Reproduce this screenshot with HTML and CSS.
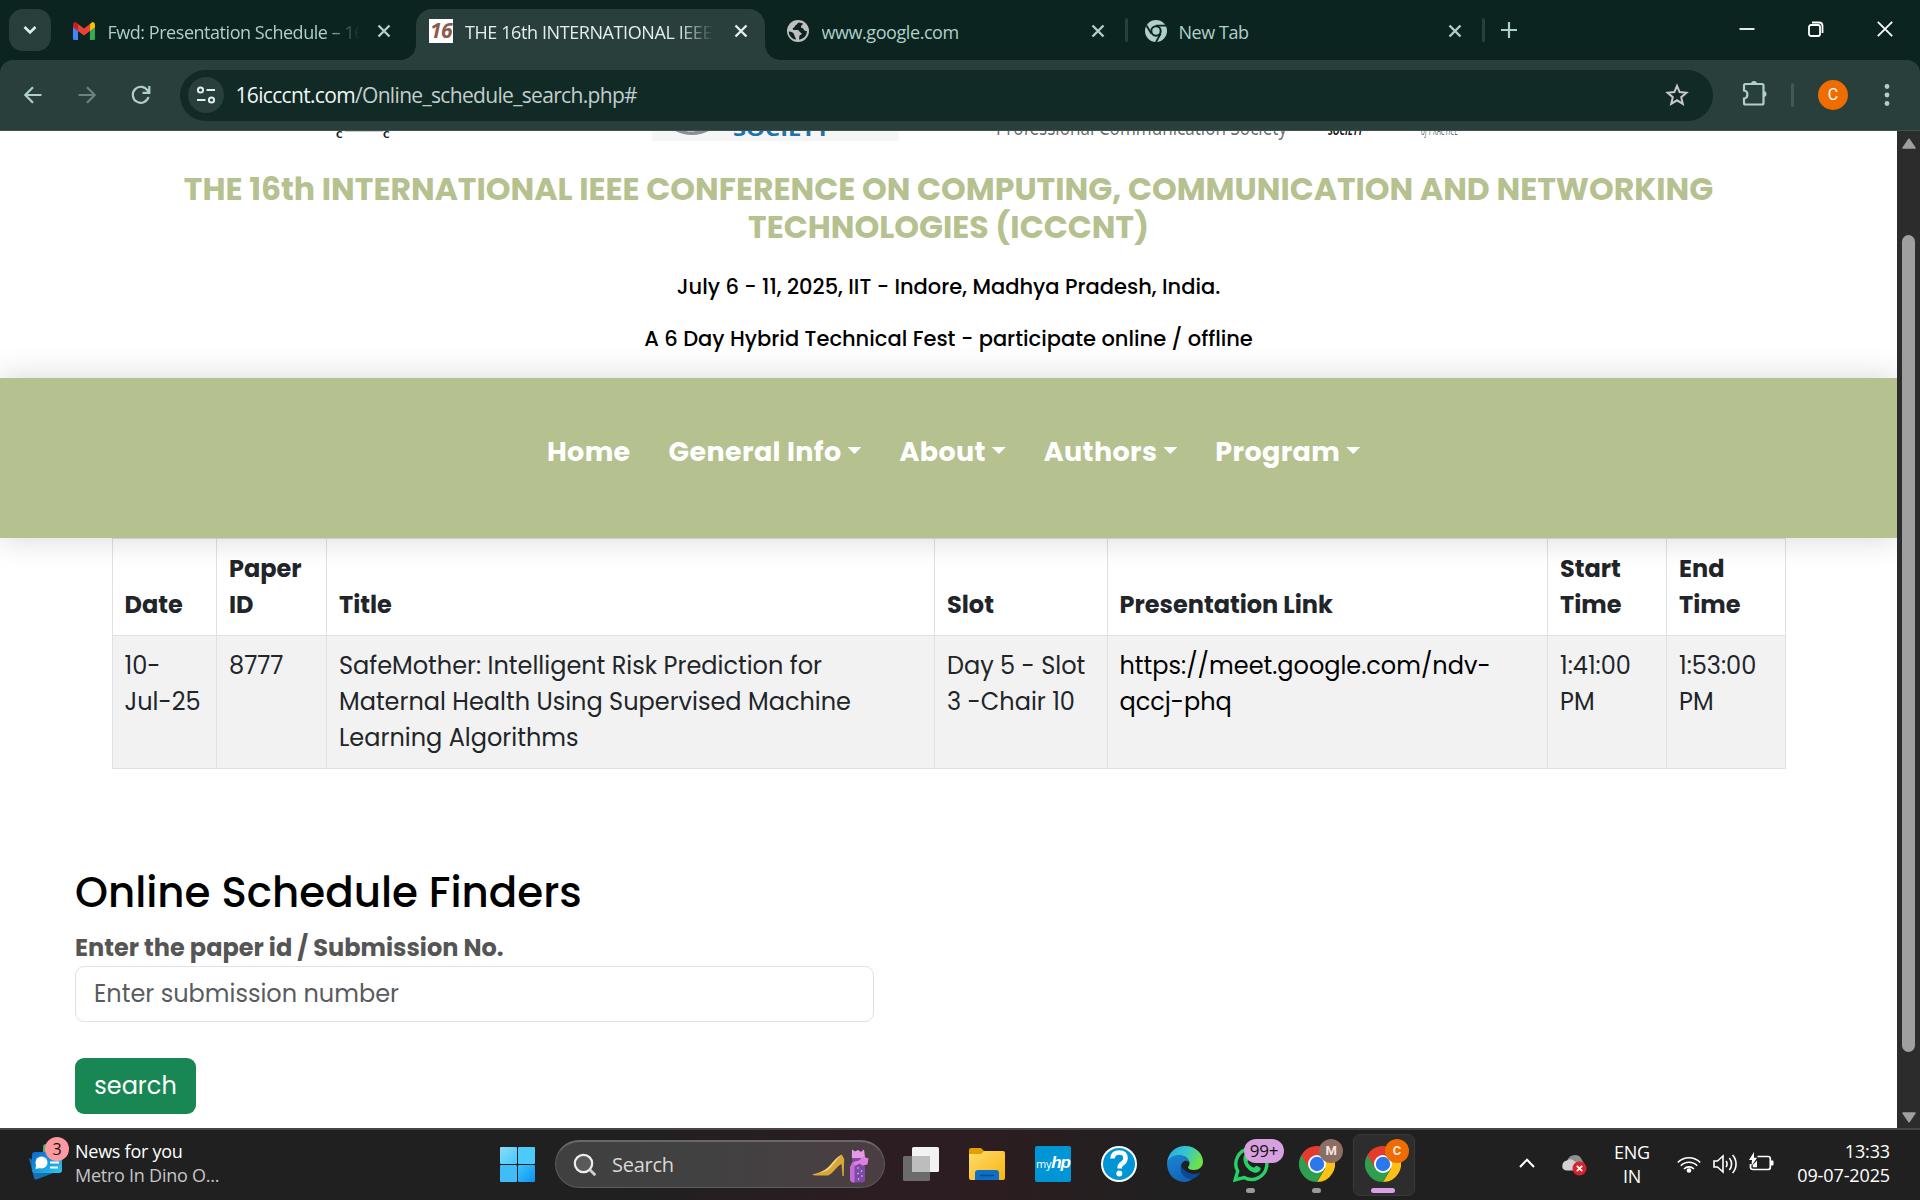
FILE: index.html
```html
<!DOCTYPE html>
<html lang="en">
<head>
<meta charset="utf-8">
<title>Online Schedule Search</title>
<link rel="stylesheet" href="styles.css">
</head>
<body>
<div class="browser">
  <header class="tabstrip">
    <button class="tab-search"><svg width="16" height="16" viewBox="0 0 16 16"><path d="M2.500 5l5.500 5.500L13.500 5" fill="none" stroke="#dff0ec" stroke-width="2.600"/></svg></button>
    <div class="tab tab-mail">
      <svg class="fav" width="22" height="18" viewBox="0 0 22 18"><path d="M0 3v13.500q0 1.500 1.500 1.500H5V7z" fill="#4285f4"/><path d="M22 3v13.500q0 1.500-1.500 1.500H17V7z" fill="#34a853"/><path d="M5 2l6 4.600L17 2v7l-6 4.600L5 9z" fill="#ea4335"/><path d="M0 5V2.500Q0 0 2.300 0 3.200 0 5 2v7L0 5.200z" fill="#c5221f"/><path d="M22 5V2.500Q22 0 19.700 0 18.800 0 17 2v7l5-3.800z" fill="#fbbc04"/></svg>
      <span class="tab-title fade">Fwd: Presentation Schedule – 16</span>
      <svg class="x" width="14" height="14" viewBox="0 0 14 14"><path d="M1.500 1.500l11 11M12.500 1.500l-11 11"/></svg>
    </div>
    <div class="tab tab-active">
      <span class="fav16">16</span>
      <span class="tab-title fade">THE 16th INTERNATIONAL IEEE</span>
      <svg class="x" width="14" height="14" viewBox="0 0 14 14"><path d="M1.500 1.500l11 11M12.500 1.500l-11 11"/></svg>
    </div>
    <div class="tab tab-google">
      <svg class="fav" width="22" height="22" viewBox="0 0 22 22"><circle cx="11" cy="11" r="11" fill="#bfbfbf"/><path d="M12 2.500c-2 .5-1.500 2-3 2.500s-.8 2-2 2.600S5 9 6.500 10h4c2 0 1.500 2 3 2.500s2 2-1 3l-.5 4c5-.5 8-4 7.800-8.500-2 .5-3-1-3.500-2.200s-2.800-.3-2.300-2.300 2-1.500 2-3z" fill="#0b2420"/><path d="M1.800 11.500c3 0 5.200 1.200 5.500 3.500s1.600 2 1.500 4.700c-4-.8-7-4-7-8.200z" fill="#0b2420"/></svg>
      <span class="tab-title">www.google.com</span>
      <svg class="x" width="14" height="14" viewBox="0 0 14 14"><path d="M1.500 1.500l11 11M12.500 1.500l-11 11"/></svg>
    </div>
    <i class="tab-div"></i>
    <div class="tab tab-new">
      <svg class="fav" width="22" height="22" viewBox="0 0 22 22"><circle cx="11" cy="11" r="11" fill="#b0cfc9"/><circle cx="11" cy="11" r="4.700" fill="none" stroke="#0b2420" stroke-width="2"/><path d="M11 5.700h10M6.300 13.600L1.500 5.500M15.700 13.600L11 22" stroke="#0b2420" stroke-width="1.800"/></svg>
      <span class="tab-title">New Tab</span>
      <svg class="x" width="14" height="14" viewBox="0 0 14 14"><path d="M1.500 1.500l11 11M12.500 1.500l-11 11"/></svg>
    </div>
    <i class="tab-div"></i>
    <svg class="plus" width="16" height="16" viewBox="0 0 16 16"><path d="M8 0v16M0 8h16" stroke="#b0cfc9" stroke-width="2.200"/></svg>
    <div class="win-buttons">
      <svg width="16" height="16" viewBox="0 0 16 16"><path d="M.5 8h15"/></svg>
      <svg width="16" height="16" viewBox="0 0 16 16"><rect x="1" y="4" width="11" height="11" rx="2"/><path d="M4 1.500h7q3.500 0 3.500 3.500v7"/></svg>
      <svg width="16" height="16" viewBox="0 0 16 16"><path d="M.8.8l14.400 14.400M15.200.8L.8 15.200"/></svg>
    </div>
  </header>

  <div class="toolbar">
    <svg class="nav-i" width="18" height="18" viewBox="0 0 18 18"><path d="M17.500 9H1.500M9 1.200L1.300 9 9 16.800"/></svg>
    <svg class="nav-i off" width="18" height="18" viewBox="0 0 18 18"><path d="M.5 9h16M9 1.200L16.700 9 9 16.800"/></svg>
    <svg class="nav-i" width="20" height="20" viewBox="0 0 20 20"><path d="M17.500 12a8 8 0 1 1-.8-6.300L18 7.500M18.300 1v6.800h-6.800"/></svg>
    <div class="omnibox">
      <span class="site-info"><svg width="20" height="18" viewBox="0 0 20 18"><g fill="none" stroke="#dff0ec" stroke-width="2"><circle cx="4.500" cy="4" r="2.600"/><path d="M10.500 4H19"/><circle cx="15.500" cy="14" r="2.600"/><path d="M1 14h8.500"/></g></svg></span>
      <span class="url"><b>16icccnt.com</b>/Online_schedule_search.php#</span>
      <svg class="star" width="24" height="24" viewBox="0 0 24 24"><path d="M12 2.800l2.600 6.300 6.800.6-5.200 4.500 1.600 6.700L12 17.300l-5.800 3.600 1.600-6.700L2.600 9.700l6.800-.6z" fill="none" stroke="#c8c8c8" stroke-width="2"/></svg>
    </div>
    <svg class="puzzle" width="26" height="26" viewBox="0 0 26 26"><path d="M3.500 4H21q1.500 0 1.500 1.500V23q0 1.500-1.500 1.500H4.500Q3 24.500 3 23v-4.500c4.500-.5 4.500-7.500 0-8V5.500Q3 4 4.500 4" fill="none" stroke="#b0cfc9" stroke-width="2.200"/><path d="M10 4a3 3 0 0 1 6 0zM22.500 11a3 3 0 0 1 0 6z" fill="#b0cfc9"/></svg>
    <i class="tool-div"></i>
    <span class="avatar">C</span>
    <svg class="dots" width="6" height="26" viewBox="0 0 6 26" fill="#b0cfc9"><circle cx="3" cy="4.500" r="2.400"/><circle cx="3" cy="13" r="2.400"/><circle cx="3" cy="21.500" r="2.400"/></svg>
  </div>

  <div class="viewport">
    <main class="page">
      <svg class="logos" width="1897" height="39" viewBox="0 0 1897 39">
        <rect x="652" y="0" width="247" height="10" fill="#f6f6f6"/>
        <ellipse cx="692" cy="-12" rx="25" ry="16" fill="#8d8d92"/><ellipse cx="691" cy="-14" rx="19" ry="14.500" fill="#f6f6f6"/>
        <text x="733" y="4.500" class="lg-society" textLength="97" lengthAdjust="spacingAndGlyphs">SOCIETY</text>
        <text x="336" y="7" class="lg-c">C</text><text x="383" y="7" class="lg-c">C</text>
        <path d="M345 .5h38" stroke="#c9cdc9"/>
        <text x="996" y="4" class="lg-pcs" textLength="291" lengthAdjust="spacingAndGlyphs">Professional Communication Society</text>
        <text x="1328" y="4" class="lg-bold" textLength="35" lengthAdjust="spacingAndGlyphs">SOCIETY</text>
        <text x="1421" y="4" class="lg-thin" textLength="37" lengthAdjust="spacingAndGlyphs">of PRACTICE</text>
      </svg>
      <div class="masthead">
        <h1>THE 16th INTERNATIONAL IEEE CONFERENCE ON COMPUTING, COMMUNICATION AND NETWORKING<br>TECHNOLOGIES (ICCCNT)</h1>
        <p>July 6 - 11, 2025, IIT - Indore, Madhya Pradesh, India.</p>
        <p>A 6 Day Hybrid Technical Fest - participate online / offline</p>
      </div>
      <nav class="menu">
        <a>Home</a>
        <a class="drop">General Info</a>
        <a class="drop">About</a>
        <a class="drop">Authors</a>
        <a class="drop">Program</a>
      </nav>
      <table class="schedule">
        <colgroup><col class="c1"><col class="c2"><col class="c3"><col class="c4"><col class="c5"><col class="c6"><col class="c7"></colgroup>
        <tr class="head">
          <th>Date</th><th>Paper<br>ID</th><th>Title</th><th>Slot</th><th class="link">Presentation Link</th><th>Start<br>Time</th><th>End<br>Time</th>
        </tr>
        <tr class="odd">
          <td>10-<br>Jul-25</td>
          <td>8777</td>
          <td>SafeMother: Intelligent Risk Prediction for<br>Maternal Health Using Supervised Machine<br>Learning Algorithms</td>
          <td>Day 5 - Slot<br>3 -Chair 10</td>
          <td class="link">https://meet.google.com/ndv-<br>qccj-phq</td>
          <td>1:41:00<br>PM</td>
          <td>1:53:00<br>PM</td>
        </tr>
      </table>
      <section class="finder">
        <h2>Online Schedule Finders</h2>
        <label>Enter the paper id / Submission No.</label>
        <div class="field">Enter submission number</div>
        <button class="search">search</button>
      </section>
    </main>
    <div class="scrollbar">
      <svg width="14" height="11" viewBox="0 0 14 11"><path d="M7 1.200L13 10H1z" fill="#9f9f9f" stroke="#9f9f9f" stroke-width="1.500" stroke-linejoin="round"/></svg>
      <i class="thumb"></i>
      <svg width="14" height="11" viewBox="0 0 14 11"><path d="M7 9.800L13 1H1z" fill="#9f9f9f" stroke="#9f9f9f" stroke-width="1.500" stroke-linejoin="round"/></svg>
    </div>
  </div>

  <footer class="taskbar">
    <div class="news">
      <div class="news-icon">
        <svg width="34" height="38" viewBox="0 0 34 38"><rect x="14" y="0" width="14" height="20" rx="3" fill="#4caf6e"/><path d="M0 14l5 20q.5 2 2.500 1.400L27 28z" fill="#1670b8"/><defs><linearGradient id="nw" x1="0" y1="0" x2="1" y2="1"><stop offset="0" stop-color="#0a66d0"/><stop offset="1" stop-color="#2bc9ea"/></linearGradient></defs><rect x="3" y="8" width="30" height="21" rx="3" fill="url(#nw)"/><circle cx="12.500" cy="18.500" r="6" fill="#fff"/><path d="M6.500 25l1-6 4 5z" fill="#fff"/><path d="M21 18.500h9M21 23.500h8" stroke="#fff" stroke-width="2"/></svg>
        <b class="news-badge">3</b>
      </div>
      <div class="news-text"><b>News for you</b><br>Metro In Dino O...</div>
    </div>
    <div class="apps">
      <svg class="start" width="35" height="35" viewBox="0 0 35 35"><defs><linearGradient id="wn" x1="0" y1="0" x2="1" y2="1"><stop offset="0" stop-color="#8adcfa"/><stop offset="1" stop-color="#45c8fb"/></linearGradient><linearGradient id="wn2" x1="0" y1="0" x2="1" y2="1"><stop offset="0" stop-color="#3cc3fb"/><stop offset="1" stop-color="#0d93f5"/></linearGradient></defs><rect width="17" height="17" rx="1" fill="url(#wn)"/><rect x="18" width="17" height="17" rx="1" fill="#4ccbfb"/><rect y="18" width="17" height="17" rx="1" fill="#40bdf8"/><rect x="18" y="18" width="17" height="17" rx="1" fill="url(#wn2)"/></svg>
      <div class="searchbox">
        <svg width="24" height="24" viewBox="0 0 24 24"><circle cx="10.500" cy="10.500" r="8.700" fill="#5a5a5a" stroke="#eee" stroke-width="2.200"/><path d="M16.800 16.800l5.500 5.500" stroke="#d0d0d0" stroke-width="2.800"/></svg>
        <span class="search-text">Search</span>
        <svg width="60" height="36" viewBox="0 0 60 36"><path d="M1 27.500C9 25.500 14 24 19 18.500 23 14 26 10 30.500 7.500q3.500 3.500 2.500 9L32.800 29h-1.400l-.9-12C26 19 22 26.500 17 28.500H5q-3 0-4-1z" fill="#d9a638"/><path d="M30.500 7.500C26 10 23 14 19 18.500c-3.500 4-7 5.700-11 7 6 0 9.500-2.500 13-6.500s6-8 9.500-11.500z" fill="#f4d382"/><path d="M41 2.500l3 2 3-1.500 3 2 3-2.500 1 8-2 5 2 4v13q0 3-3 3h-8q-4 0-4-3.500V20l2.500-5-1-6z" fill="#7d4aa8"/><path d="M41 2.500l3 2 3-1.500 3 2 3-2.500 1 8.500H41z" fill="#e59be4"/><path d="M42 15l6-1.500 4-4 5.500 2-1 6-5 1-3-2-6 3z" fill="#e07fe0"/><path d="M39 20l2.500-5 2 1v19.500H43q-4 0-4-3.500z" fill="#c46bd8"/><g fill="#e8d0ff"><circle cx="47" cy="21" r=".8"/><circle cx="50.500" cy="24" r=".8"/><circle cx="47" cy="26.500" r=".8"/><circle cx="51" cy="29" r=".8"/><circle cx="47.500" cy="32" r=".8"/></g></svg>
      </div>
      <div class="app"><svg width="36" height="36" viewBox="0 0 36 36"><rect x="9" y="1" width="27" height="25" rx="1.500" fill="#f2f2f2"/><rect x="0" y="10" width="27" height="25" rx="1.500" fill="#6b6b6b"/><rect x="9" y="10" width="18" height="16" fill="#bdbdbd"/></svg></div>
      <div class="app"><svg width="36" height="36" viewBox="0 0 36 36"><defs><linearGradient id="fd" x1="0" y1="0" x2="1" y2="1"><stop offset="0" stop-color="#ffdc6e"/><stop offset="1" stop-color="#f8b50f"/></linearGradient></defs><path d="M0 4q0-2 2-2h10l3 3v6H0z" fill="#dfa000"/><path d="M0 8h12l3-3h19q2 0 2 2v25q0 2-2 2H2q-2 0-2-2z" fill="url(#fd)"/><path d="M6 34V27q0-3 3-3h18q3 0 3 3v7z" fill="#0f6fc4"/><path d="M11 29.500h14" stroke="#0a4a8c" stroke-width="1.500"/></svg></div>
      <div class="app"><div class="myhp"><span>my</span><i>hp</i></div></div>
      <div class="app"><svg width="36" height="36" viewBox="0 0 36 36"><circle cx="18" cy="18" r="18" fill="#fff"/><circle cx="18" cy="18" r="16" fill="#0096d6"/><path d="M11.500 12.500q.3-6 6.700-6 6.300 0 6.300 5.700 0 3.300-3.200 5.300-2.600 1.700-2.600 3.800v1.200" fill="none" stroke="#fff" stroke-width="4.600"/><circle cx="18.300" cy="27.500" r="3" fill="#fff"/></svg></div>
      <div class="app"><svg width="36" height="36" viewBox="0 0 36 36"><defs><linearGradient id="e1" x1="0" y1="0" x2="1" y2=".4"><stop offset="0" stop-color="#2aa6e8"/><stop offset=".55" stop-color="#35c6cf"/><stop offset="1" stop-color="#6fe04a"/></linearGradient><linearGradient id="e2" x1="0" y1="0" x2=".4" y2="1"><stop offset="0" stop-color="#1b86d6"/><stop offset="1" stop-color="#1464b8"/></linearGradient></defs><path d="M0 17C1 7 8 0 18 0c11 0 18 8 18 15.500 0 5.500-4 8.500-9 8.500-4 0-6-1.500-6-2.500s1.500-1.500 1.500-4C22.500 13 18 9.500 12.500 9.500 6 9.500 1.500 13 0 17z" fill="url(#e1)"/><path d="M0 17C1.500 12 6 9 12 9c6 0 10.500 4 10.500 8.500 0-3-7-5-8.500 2.500-1.500 8 6 14 12 12.500-3 2.500-6 3.500-9 3.500C7 35.500 0 28 0 17z" fill="url(#e2)"/><path d="M14 20c-1.500 8 5 14.500 12 12.800 3-1 6-3.500 7.500-6.500-3.500 2-8.500 2.200-12.500.2-3.500-1.700-5.800-4.500-7-6.500z" fill="#0c4a94"/></svg></div>
      <div class="app run"><svg width="36" height="36" viewBox="0 0 36 36"><path d="M2.200 33.800l2.500-8.500A15.500 15.500 0 1 1 11 31.600z" fill="none" stroke="#25d366" stroke-width="3.400"/><path d="M11 9.500c1-1.500 3-1.500 3.600 0l1.300 3.200c.4 1.300-1.700 2.300-1.300 3.300 1.300 2.800 3.400 4.600 6 5.600 1.200.4 2-2.300 3.500-1.700l3 1.600c1.500.9 0 4.500-3.600 5.200C17.500 27.500 8 18 11 9.500z" fill="#25d366"/></svg><b class="count">99+</b></div>
      <div class="app run"><svg width="36" height="36" viewBox="0 0 36 36"><g id="chrome"><path d="M18 18L33.600 9A18 18 0 0 1 18 36l8-13.500z" fill="#fbc116"/><path d="M2.400 9A18 18 0 0 0 18 36l7.800-13.500L18 18z" fill="#2e9f4e"/><path d="M18 9h15.600a18 18 0 0 0-31.200 0l7.800 13.500z" fill="#e33b2e"/><circle cx="18" cy="18" r="9" fill="#fff"/><circle cx="18" cy="18" r="7.200" fill="#2b78ee"/></g></svg><b class="pf pf-m">M</b></div>
      <div class="app run active"><svg width="36" height="36" viewBox="0 0 36 36"><use href="#chrome"/></svg><b class="pf pf-c">C</b></div>
    </div>
    <div class="tray">
      <svg class="chev" width="16" height="10" viewBox="0 0 16 10"><path d="M1 9l7-7.300L15 9" fill="none" stroke="#fff" stroke-width="2"/></svg>
      <svg class="cloud" width="26" height="22" viewBox="0 0 26 22"><path d="M5 7q2-6 8-6 5 0 7 5l3 5H7z" fill="#8f8f8f"/><path d="M4.500 16.500Q0 16 .3 11.500.8 7 5 6.500q3-2.500 6.500 0l8 6-4 4z" fill="#d2d2d2"/><circle cx="17.500" cy="14.500" r="7" fill="#d8232e"/><path d="M14.800 11.800l5.400 5.400M20.200 11.800l-5.400 5.400" stroke="#fff" stroke-width="1.700"/></svg>
      <div class="lang">ENG<br>IN</div>
      <svg class="wifi" width="24" height="18" viewBox="0 0 24 18"><g fill="none" stroke="#fff" stroke-width="1.600"><path d="M.8 7.500a15.500 15.500 0 0 1 22.400 0M3.800 10.800a11.300 11.300 0 0 1 16.400 0M7 14a7 7 0 0 1 10 0"/></g><circle cx="12" cy="15.500" r="2.300" fill="#fff"/></svg>
      <svg class="spk" width="25" height="20" viewBox="0 0 25 20"><g fill="none" stroke="#fff" stroke-width="1.600"><path d="M1 7h3.500L10 2v16l-5.500-5H1z"/><path d="M13 7a5 5 0 0 1 0 6M16.300 4a9 9 0 0 1 0 12M19.600 1a13.500 13.500 0 0 1 0 18"/></g></svg>
      <svg class="bat" width="25" height="20" viewBox="0 0 25 20"><path d="M8.500 4.500H19q2.300 0 2.300 2.300v8.400q0 2.300-2.300 2.300H4q-2.500 0-2.500-2.300V12" fill="none" stroke="#fff" stroke-width="1.700"/><path d="M22 8.500h1.500q1 0 1 1v3q0 1-1 1H22z" fill="#fff"/><path d="M5 0L0 8h3l-.5 6L8 5.800H5z" fill="#fff"/><path d="M3.800 15.300V13L8 8.500v6.800z" fill="#fff"/></svg>
      <div class="clock">13:33<br>09-07-2025</div>
    </div>
  </footer>
</div>
</body>
</html>
```
FILE: styles.css
```css
* { box-sizing: border-box; }
body { margin: 0; background: #fff; font-family: Poppins, Inter, sans-serif; }
svg { display: block; flex: none; }
button { border: 0; padding: 0; font: inherit; }
.browser { width: 1920px; height: 1200px; display: flex; flex-direction: column; overflow: hidden; background: #0b2420; }

/* tab strip */
.tabstrip { height: 60px; flex: none; display: flex; background: #0b2420; font: 18px/24px "Segoe UI", "Open Sans", sans-serif; letter-spacing: -.43px; color: #b0cfc9; }
.tab-search { width: 42px; height: 42px; margin: 9px 0 0 9px; border-radius: 14px; background: #283f3b; display: grid; place-items: center; }
.tab { display: flex; align-items: center; height: 51px; margin-top: 9px; padding-bottom: 8px; white-space: nowrap; }
.tab-mail { width: 365px; padding-left: 22px; padding-right: 25px; }
.tab-active { width: 349px; padding-left: 13px; padding-right: 17px; background: #283f3b; color: #e4eeec; border-radius: 16px 16px 0 0; position: relative; }
.tab-active::before, .tab-active::after { content: ""; position: absolute; bottom: 0; width: 15px; height: 15px; }
.tab-active::before { left: -15px; background: radial-gradient(circle at 0 0, transparent 14.5px, #283f3b 15px); }
.tab-active::after { right: -15px; background: radial-gradient(circle at 100% 0, transparent 14.5px, #283f3b 15px); }
.tab-google { width: 360px; padding-left: 22px; padding-right: 20px; }
.tab-new { width: 354px; padding-left: 17px; padding-right: 20px; }
.tab-title { flex: 1; overflow: hidden; margin: 2px 18px 0 12.5px; }
.tab-new .tab-title { margin-left: 11.5px; }
.tab-mail .tab-title { margin-right: 17px; letter-spacing: -.46px; }
.tab-active .tab-title { margin-right: 20px; margin-left: 12px; letter-spacing: -.41px; }
.fade { -webkit-mask-image: linear-gradient(90deg, #000 calc(100% - 36px), transparent); mask-image: linear-gradient(90deg, #000 calc(100% - 36px), transparent); }
.x path { stroke: #b0cfc9; stroke-width: 2.4; }
.tab-active .x path { stroke: #e4eeec; }
.fav16 { width: 24px; height: 24px; background: #fff; color: #8d5a4c; font: italic bold 21px/23px "Open Sans", sans-serif; letter-spacing: -.5px; text-align: center; }
.tab-div { width: 3px; height: 24px; margin-top: 18px; background: #283f3b; border-radius: 2px; }
.plus { margin: 22px 0 0 16px; }
.win-buttons { margin: 21px 27px 0 auto; display: flex; gap: 53px; }
.win-buttons path, .win-buttons rect { fill: none; stroke: #fff; stroke-width: 1.8; }

/* toolbar */
.toolbar { height: 71px; flex: none; display: flex; align-items: center; background: #283f3b; border-radius: 13px 13px 0 0; border-bottom: 1px solid #3d524e; padding: 0 30px 0 24px; }
.nav-i { margin-right: 36px; }
.nav-i path { fill: none; stroke: #b0cfc9; stroke-width: 2.2; }
.nav-i.off path { stroke: #6b827d; }
.nav-i + .nav-i + .nav-i { margin: 0 29px 0 -1px; }
.omnibox { width: 1533px; height: 51px; border-radius: 26px; background: #112a26; display: flex; align-items: center; padding: 0 24px 0 8px; }
.site-info { width: 36px; height: 36px; border-radius: 50%; background: #283f3b; display: grid; place-items: center; }
.url { margin: -1px 0 0 11.5px; flex: 1; font: 21px/28px "Segoe UI", "Open Sans", sans-serif; letter-spacing: -.67px; color: #c3cfcc; white-space: nowrap; }
.url b { font-weight: 400; color: #f1f6f5; }
.puzzle { margin: -4px 0 0 28px; }
.tool-div { width: 3px; height: 24px; margin-left: 24px; background: #3f5a55; border-radius: 2px; }
.avatar { width: 30px; height: 30px; margin-left: 24px; border-radius: 50%; background: #ef6c00; color: #fff; font: 16px/30px Roboto, sans-serif; text-align: center; }
.dots { margin-left: 36px; }

/* page */
.viewport { height: 997px; flex: none; display: flex; background: #fff; }
.page { width: 1897px; flex: none; overflow: hidden; background: #fff; color: #212529; }
.logos { overflow: hidden; }
.lg-society { font: bold 20px "Open Sans", sans-serif; fill: #1a74ad; }
.lg-c { font: bold 9px "DejaVu Sans", sans-serif; fill: #222; }
.lg-pcs { font: 21px "Open Sans", sans-serif; fill: #6b6b6b; }
.lg-bold { font: italic bold 13px "Open Sans", sans-serif; fill: #111; }
.lg-thin { font: italic 13px "Open Sans", sans-serif; fill: #666; }
.masthead { height: 208px; text-align: center; white-space: nowrap; color: #000; }
.masthead h1 { margin: 0; font-size: 31.5px; line-height: 38px; font-weight: 700; color: #b5c18e; }
.masthead p { margin: 0 0 20px; font-size: 21px; line-height: 32px; font-weight: 500; }
.masthead h1 + p { margin-top: 25px; }
.menu { height: 160px; position: relative; display: flex; gap: 38px; padding: 53px 0 0 547px; background: #b5c18e; box-shadow: 0 0 30px rgba(0, 0, 0, .17); color: #fff; font-size: 27px; line-height: 42px; font-weight: 700; letter-spacing: .35px; white-space: nowrap; }
.drop { display: flex; }
.drop::after { content: ""; margin: 16px 0 0 6px; width: 14px; height: 7px; background: #fff; clip-path: polygon(0 0, 100% 0, 50% 100%); }
.schedule { margin: 0 0 0 112px; width: 1673px; table-layout: fixed; border-collapse: collapse; font-size: 24px; line-height: 36px; white-space: nowrap; }
.schedule th, .schedule td { border: 1px solid #dee2e6; text-align: left; }
.head { height: 97px; }
.schedule th { padding: 6px 12px 12px; vertical-align: bottom; font-weight: 700; }
.schedule td { padding: 12px 12px 6px; vertical-align: top; }
.schedule tr > :first-child, .schedule .link { padding-left: 11.5px; }
.odd { height: 133px; background: #f2f2f2; }
td.link { color: #000; }
.c1 { width: 104px; } .c2 { width: 110px; } .c3 { width: 608px; } .c4 { width: 173px; } .c5 { width: 440px; } .c6 { width: 119px; } .c7 { width: 119px; }
.finder { padding: 98px 0 0 75px; white-space: nowrap; }
.finder h2 { margin: 0 0 11px; font-size: 42px; line-height: 52px; font-weight: 500; color: #000; }
.finder label { display: block; font-size: 24px; line-height: 36px; font-weight: 700; color: #555; }
.field { width: 799px; height: 56px; border: 1px solid #dee2e6; border-radius: 9px; padding: 9px 18px; font-size: 24px; line-height: 36px; color: #595c5f; }
.search { display: block; margin-top: 36px; width: 121px; height: 56px; border-radius: 9px; background: #198754; color: #fff; font-size: 24px; line-height: 36px; }
.scrollbar { width: 23px; flex: none; background: #2c2c2c; display: flex; flex-direction: column; align-items: center; padding: 7px 0 5px; }
.thumb { width: 13px; height: 817px; margin: 86px 0 auto; border-radius: 7px; background: #9f9f9f; }

/* taskbar */
.taskbar { height: 72px; flex: none; display: flex; position: relative; border-top: 2px solid #464646; background: linear-gradient(90deg, #202020 0, #202020 620px, #2b1d22 860px, #2b1d20 1000px, #202020 1180px); color: #fff; font: 18px/24px "Segoe UI", "Open Sans", sans-serif; letter-spacing: -.25px; white-space: nowrap; }
.news { width: 500px; display: flex; padding-left: 29px; }
.news-icon { position: relative; width: 46px; padding-top: 14px; }
.news-badge { position: absolute; left: 16px; top: 7px; width: 24px; height: 24px; border-radius: 50%; background: #ff99a0; color: #111; font: 16px/24px "Open Sans", sans-serif; text-align: center; }
.news-text { padding-top: 9px; line-height: 24px; color: #c5c5c5; }
.news-text b { font-weight: 400; color: #fff; }
.apps { display: flex; }
.start { margin-top: 17px; }
.searchbox { width: 330px; height: 48px; margin: 10px 3px 0 20px; border: 1px solid #5c5a5b; border-top: 2px solid #6a6768; border-radius: 24px; background: linear-gradient(90deg, #404040, #424142 50%, #4b3e43); display: flex; align-items: center; padding: 0 13px 0 17px; }
.search-text { flex: 1; margin-left: 15px; font-size: 20px; color: #d8d8d8; }
.app { width: 66px; height: 70px; position: relative; display: flex; justify-content: center; padding-top: 16px; }
.myhp { width: 36px; height: 36px; border-radius: 2px; background: #0096d6; display: flex; justify-content: center; align-items: baseline; font: 11px/34px "Open Sans", sans-serif; color: #fff; }
.myhp i { font: italic bold 17px/34px "Liberation Sans", sans-serif; letter-spacing: -1px; }
.run::after { content: ""; position: absolute; left: 28px; top: 58px; width: 9px; height: 5px; border-radius: 3px; background: #9a9a9a; }
.active::before { content: ""; position: absolute; left: 3px; top: 4px; width: 60px; height: 60px; border: 1px solid #3a3a3a; border-radius: 7px; background: #2d2d2d; }
.active svg { position: relative; }
.active::after { left: 21px; width: 24px; background: #d9a0e8; }
.count { position: absolute; left: 26px; top: 9px; width: 40px; height: 24px; border-radius: 12px; background: #d9a0e0; color: #111; font: 17px/24px "Open Sans", sans-serif; text-align: center; }
.pf { position: absolute; left: 35px; top: 9px; width: 24px; height: 24px; border-radius: 50%; font: bold 13px/24px Roboto, sans-serif; text-align: center; color: #f4e6e0; }
.pf-m { background: #8d6e63; }
.pf-c { background: #ef6c00; }
.tray { margin-left: auto; display: flex; padding-right: 30px; }
.chev { margin: 28px 27px 0 0; }
.cloud { margin: 24px 25px 0 0; }
.lang { width: 38px; text-align: center; padding-top: 10px; }
.wifi { margin: 25px 0 0 26px; }
.spk { margin: 24px 0 0 12px; }
.bat { margin: 22px 0 0 11px; }
.clock { width: 116px; text-align: right; padding-top: 9px; letter-spacing: -.12px; }
```
